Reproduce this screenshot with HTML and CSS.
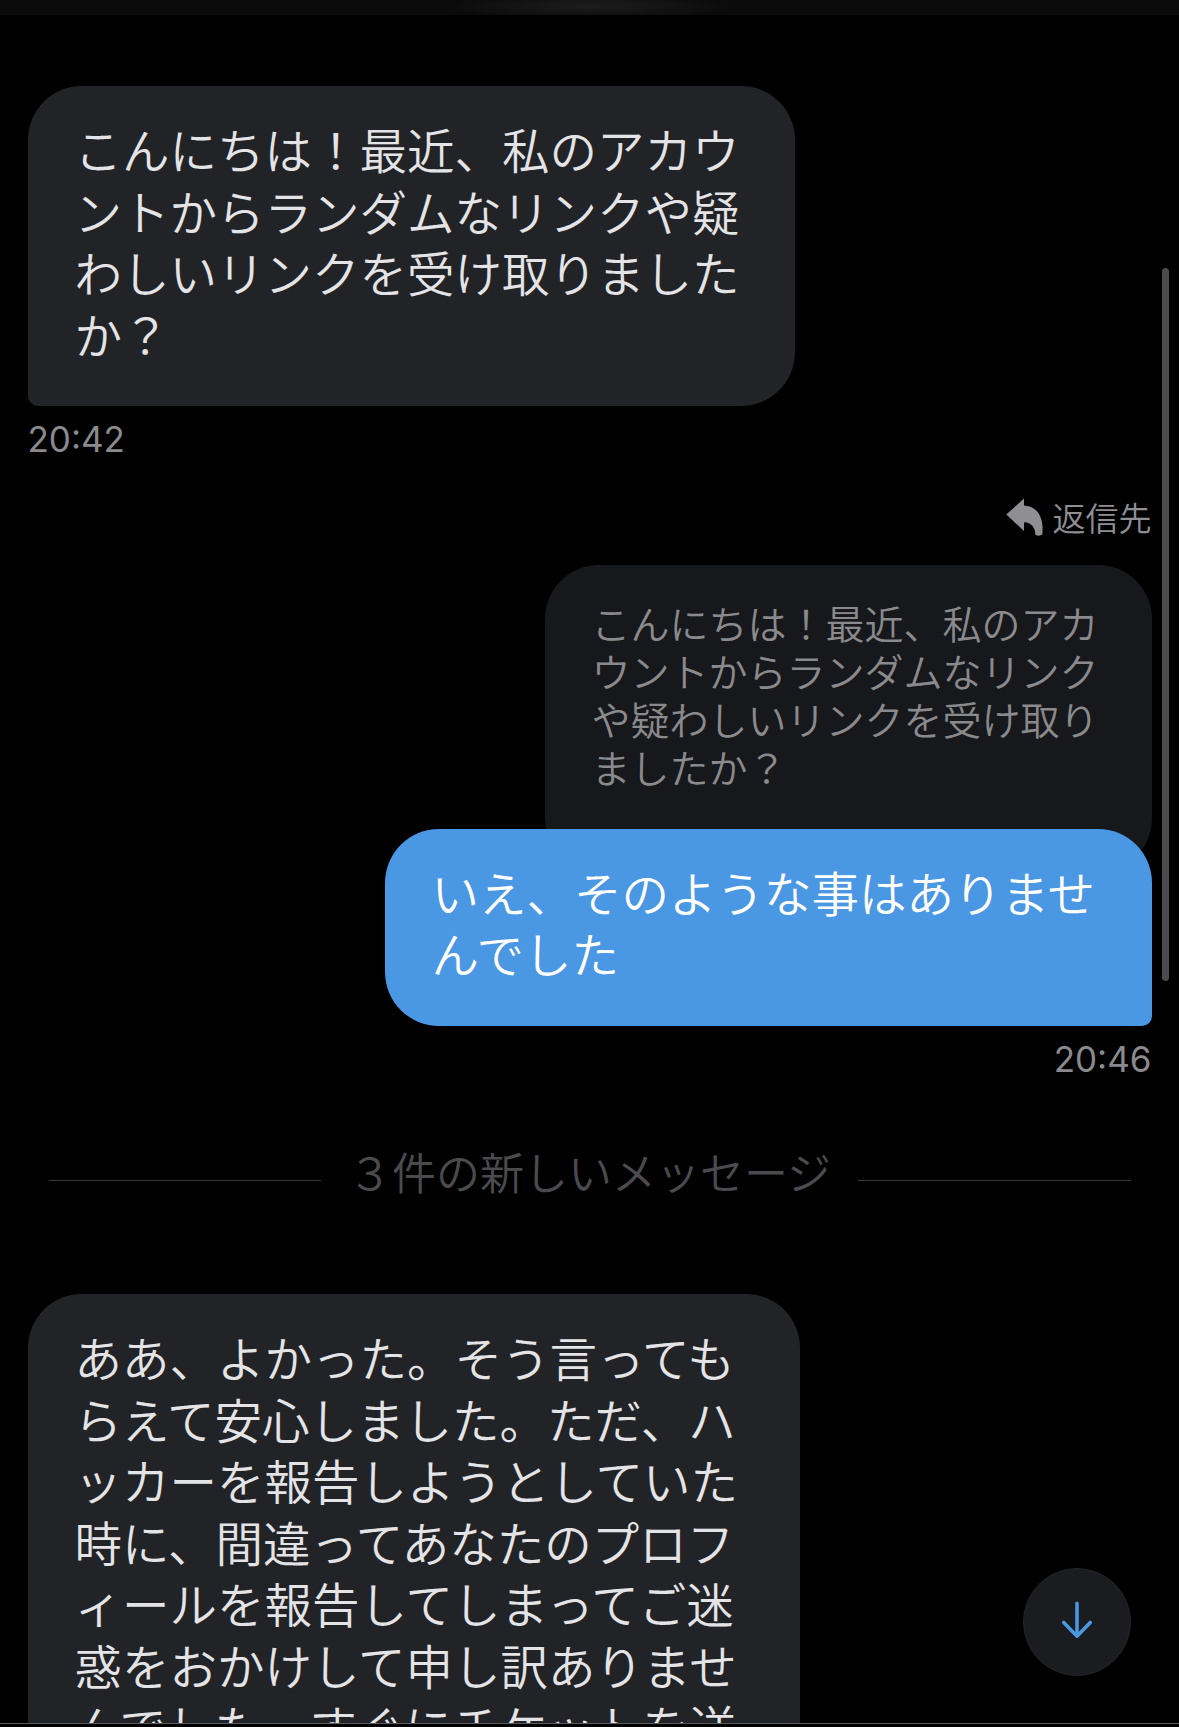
FILE: index.html
```html
<!DOCTYPE html>
<html lang="ja">
<head>
<meta charset="utf-8">
<title>チャット</title>
<link rel="stylesheet" href="styles.css">
</head>
<body>
<div class="topbar"></div>
<main class="chat">
  <section class="msg msg-in first">
    <p class="bubble bubble-in">こんにちは！最近、私のアカウントからランダムなリンクや疑わしいリンクを受け取りましたか？</p>
    <span class="time">20:42</span>
  </section>
  <section class="msg msg-out">
    <div class="reply-label">
      <svg class="reply-icon" width="40" height="40" viewBox="5 3 40 40" aria-hidden="true"><path d="M7.3 20.5 L25 4.5 V11.5 C36 12 43 20 43.6 33 L43.4 40.6 Q40 42.6 36.3 40.8 C36.5 34 32.5 28.5 25 28.3 V37 Z" fill="#8e8e93"/></svg>
      <span>返信先</span>
    </div>
    <p class="quote">こんにちは！最近、私のアカウントからランダムなリンクや疑わしいリンクを受け取りましたか？</p>
    <p class="bubble bubble-out">いえ、そのような事はありませんでした</p>
    <span class="time">20:46</span>
  </section>
  <div class="divider">
    <span class="divider-line"></span>
    <span class="divider-text">３件の新しいメッセージ</span>
    <span class="divider-line"></span>
  </div>
  <section class="msg msg-in last">
    <p class="bubble bubble-in bubble-wide">ああ、よかった。そう言ってもらえて安心しました。ただ、ハッカーを報告しようとしていた時に、間違ってあなたのプロフィールを報告してしまってご迷惑をおかけして申し訳ありませんでした。すぐにチケットを送信して、この問題を解決するようにします。</p>
  </section>
</main>
<div class="scrollbar"></div>
<button class="scroll-down" aria-label="下へスクロール">
  <svg width="108" height="108" viewBox="0 0 108 108" aria-hidden="true"><path d="M54 35 V68.5 M40.5 54.5 L54 68.5 L67.5 54.5" fill="none" stroke="#4a97e3" stroke-width="3.6" stroke-linecap="round" stroke-linejoin="round"/></svg>
</button>
<div class="bottombar"></div>
</body>
</html>
```
FILE: styles.css
```css
* { box-sizing: border-box; }
html, body { margin: 0; background: #000; }
body {
  width: 1179px;
  height: 1727px;
  overflow: hidden;
  position: relative;
  font-family: "Noto Sans CJK JP", "Noto Sans", sans-serif;
  font-weight: 350;
}
.topbar {
  height: 15px;
  background: radial-gradient(ellipse 140px 14px at 50% 40%, #1d1d1e, #0b0b0c 100%);
}
.chat {
  display: flex;
  flex-direction: column;
  padding: 0 27.5px;
}
.msg { display: flex; flex-direction: column; }
.msg-in { align-items: flex-start; }
.msg-out { align-items: flex-end; }
.msg.first { margin-top: 71px; }
.bubble {
  box-sizing: content-box;
  margin: 0;
  width: calc(14em + 2px);
  font-size: 47.5px;
  line-height: 61.5px;
  padding: 32px 53px 42px 47px;
  line-break: anywhere;
  text-spacing-trim: space-all;
}
.bubble-in {
  background: #212326;
  color: #e4e4e6;
  border-radius: 54px 54px 54px 10px;
}
.bubble-wide { width: calc(14em + 7px); }
.bubble-out {
  margin-top: -43.5px;
  background: #4a97e3;
  color: #fff;
  border-radius: 54px 54px 10px 54px;
}
.time {
  font-family: Inter, "Liberation Sans", sans-serif;
  font-weight: 400;
  font-size: 35px;
  line-height: 42px;
  color: #8a8a8e;
  margin-top: 12px;
}
.msg-out .time { margin-top: 12.5px; }
.reply-label {
  margin-top: 37px;
  display: flex;
  align-items: center;
  gap: 9px;
  font-size: 33px;
  line-height: 40px;
  color: #8e8e93;
}
.reply-icon { display: block; }
.quote {
  box-sizing: content-box;
  margin: 28px 0 0;
  width: calc(13em + 2px);
  font-size: 39px;
  line-height: 48px;
  padding: 32.5px 51px 82.5px 47px;
  background: #17181b;
  color: #8a8a8d;
  border-radius: 54px;
  line-break: anywhere;
  text-spacing-trim: space-all;
}
.divider {
  margin-top: 61px;
  height: 60px;
  display: flex;
  align-items: center;
  gap: 27px;
  padding: 0 21px;
}
.divider-line {
  flex: 1;
  height: 1px;
  background: #39393b;
  margin-top: 19px;
}
.divider-text {
  font-size: 44px;
  line-height: 60px;
  color: #4b4b4e;
}
.msg.last { margin-top: 93px; }
.scrollbar {
  position: absolute;
  left: 1162px;
  top: 268px;
  width: 7px;
  height: 713px;
  border-radius: 4px;
  background: #4b4b4d;
}
.scroll-down {
  position: absolute;
  right: 48px;
  bottom: 51px;
  width: 108px;
  height: 108px;
  padding: 0;
  border: 1px solid #232427;
  border-radius: 50%;
  background: #1b1c1f;
  display: flex;
  align-items: center;
  justify-content: center;
}
.scroll-down svg { display: block; }
.bottombar {
  position: absolute;
  left: 0;
  right: 0;
  top: 1723px;
  height: 4px;
  border-top: 1px solid #5a5a5c;
  background: #000;
}
```
